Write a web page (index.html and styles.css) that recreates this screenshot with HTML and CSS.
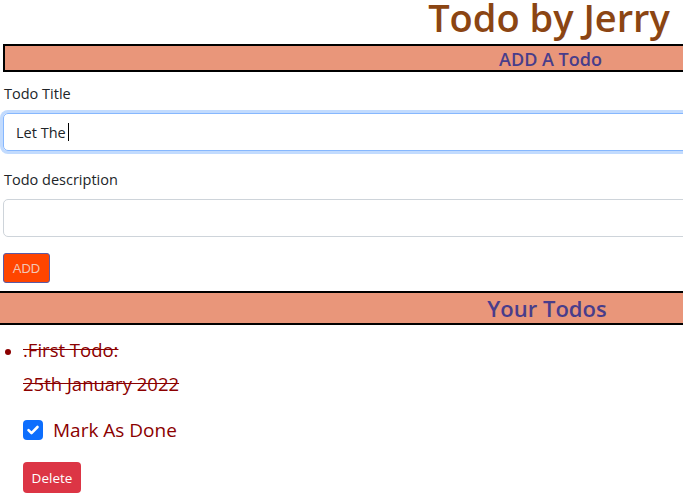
FILE: index.html
```html
<!DOCTYPE html>
<html lang="en">
<head>
<meta charset="utf-8">
<title>Todo by Jerry</title>
<link rel="stylesheet" href="styles.css">
</head>
<body>
<div class="page">
  <h1 class="title">Todo by Jerry</h1>
  <h2 class="banner banner-add">ADD A Todo</h2>
  <form class="todo-form">
    <div class="field">
      <label class="field-label" for="title">Todo Title</label>
      <div class="input focused"><span>Let The</span><span class="caret"></span></div>
    </div>
    <div class="field field-second">
      <label class="field-label" for="desc">Todo description</label>
      <div class="input"></div>
    </div>
    <button type="button" class="btn-add">ADD</button>
  </form>
  <h2 class="banner banner-list">Your Todos</h2>
  <ul class="todos">
    <li class="todo">
      <p class="todo-title">.First Todo:</p>
      <p class="todo-date">25th January 2022</p>
      <div class="check-row">
        <span class="checkbox"><svg viewBox="0 0 20 20" width="20" height="20"><path d="M5.5 10.2l3 3 6-6.2" fill="none" stroke="#fff" stroke-width="2.6" stroke-linecap="round" stroke-linejoin="round"/></svg></span>
        <span class="check-label">Mark As Done</span>
      </div>
      <button type="button" class="btn-delete">Delete</button>
    </li>
  </ul>
</div>
</body>
</html>
```

FILE: styles.css
```css
html, body {
  margin: 0;
  padding: 0;
  overflow: hidden;
  background: #fff;
}
body {
  font-family: "Open Sans", "Noto Sans", sans-serif;
  color: #212529;
}
.page {
  width: 1098px;
}
.title {
  margin: 0;
  height: 44px;
  text-align: center;
  font-size: 38px;
  line-height: 34px;
  font-weight: 600;
  color: #8b4513;
}
.banner {
  margin: 0;
  background: #e9967a;
  border: 2px solid #000;
  text-align: center;
  color: #483d8b;
  font-weight: 600;
  box-sizing: border-box;
}
.banner-add {
  margin-left: 3px;
  height: 28px;
  font-size: 18px;
  line-height: 26px;
}
.banner-list {
  margin-left: -4px;
  margin-top: 8px;
  height: 34px;
  font-size: 22px;
  line-height: 30px;
}
.todo-form {
  padding: 0 0 0 3px;
}
.field {
  margin-bottom: 16px;
}
.field-second {
  padding-top: 2px;
}
.field-label {
  display: block;
  font-size: 14.5px;
  line-height: 22px;
  margin: 11px 0 8px 1px;
}
.field-second .field-label {
  margin-top: 0;
}
.input {
  height: 38px;
  box-sizing: border-box;
  border: 1px solid #ced4da;
  border-radius: 5px;
  display: flex;
  align-items: center;
  padding-left: 12px;
  font-size: 14.5px;
  color: #212529;
}
.input.focused {
  border-color: #86b7fe;
  box-shadow: 0 0 0 3px #c2dbfe;
}
.caret {
  width: 1px;
  height: 18px;
  background: #000;
  margin-left: 2px;
}
.btn-add {
  display: block;
  height: 30px;
  width: 47px;
  padding: 0;
  background: #ff4500;
  color: #f2c6b5;
  border: 1px solid #5a5aa6;
  border-radius: 3px;
  font-family: "Liberation Sans", Arial, sans-serif;
  font-size: 13px;
}
.todos {
  margin: 13px 0 0;
  padding-left: 23px;
  color: #8b0000;
}
.todo-title, .todo-date {
  margin: 0;
  font-size: 18.5px;
  line-height: 24px;
  text-decoration: line-through;
}
.todo-date {
  margin-top: 10px;
}
.check-row {
  display: flex;
  align-items: center;
  margin-top: 23px;
  height: 22px;
}
.checkbox {
  width: 20px;
  height: 20px;
  border-radius: 4px;
  background: #0d6efd;
  display: flex;
}
.check-label {
  margin-left: 10px;
  font-size: 19px;
}
.btn-delete {
  margin-top: 21px;
  height: 31px;
  width: 58px;
  padding: 0;
  border: none;
  border-radius: 4px;
  background: #dc3545;
  color: #fff;
  font-family: "Open Sans", sans-serif;
  font-size: 13.5px;
}
```
